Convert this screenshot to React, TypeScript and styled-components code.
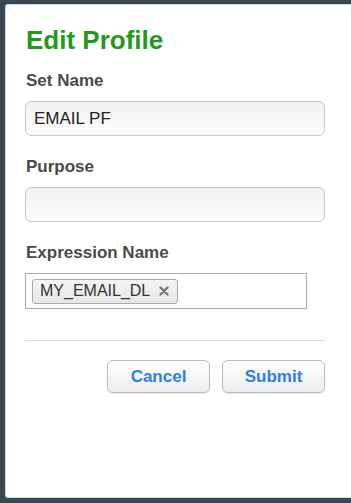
import styled, { createGlobalStyle } from "styled-components";

const GlobalStyle = createGlobalStyle`
  html, body {
    margin: 0;
    padding: 0;
    background: #3b4650;
    font-family: "Liberation Sans", Arial, sans-serif;
  }
`;

const Screen = styled.div`
  width: 351px;
  height: 503px;
  padding: 4px 0 5px 5px;
  box-sizing: border-box;
`;

const Dialog = styled.div`
  height: 100%;
  background: #fff;
  border-top: 1px solid #b6dcf5;
  border-left: 1px solid #b6dcf5;
  border-bottom: 1px solid #b6dcf5;
  border-radius: 3px 0 0 3px;
  box-sizing: border-box;
  padding: 20px 26px 0 19px;
`;

const Title = styled.h1`
  margin: 0 0 16px 1px;
  font-size: 26px;
  line-height: 30px;
  font-weight: bold;
  color: #1f9a1a;
`;

const Field = styled.div`
  display: flex;
  flex-direction: column;
  margin-bottom: 21px;
`;

const Label = styled.label`
  font-size: 17px;
  font-weight: bold;
  color: #4a4a4a;
  line-height: 20px;
  margin: 0 0 10px 1px;
`;

const TextInput = styled.input`
  height: 35px;
  box-sizing: border-box;
  width: 100%;
  border: 1px solid #c8c8c8;
  border-radius: 6px;
  background: linear-gradient(to bottom, #f1f1f1, #fcfcfc);
  padding: 0 8px;
  font-family: "Liberation Sans", Arial, sans-serif;
  font-size: 17px;
  color: #222;
  outline: none;
`;

const TagBox = styled.div`
  width: 282px;
  height: 36px;
  box-sizing: border-box;
  border: 1px solid #aaa;
  background: #fff;
  display: flex;
  align-items: center;
  padding: 0 6px;
`;

const Tag = styled.span`
  display: inline-flex;
  align-items: center;
  gap: 9px;
  height: 25px;
  box-sizing: border-box;
  padding: 0 8px 0 7px;
  border: 1px solid #aaa;
  border-radius: 3px;
  background: linear-gradient(to bottom, #f4f4f4, #e6e6e6);
  font-size: 16px;
  color: #333;
`;

const Remove = styled.svg`
  width: 10px;
  height: 10px;
`;

const Divider = styled.hr`
  border: 0;
  border-top: 1px solid #dcdcdc;
  margin: 31px 0 19px 0;
`;

const Actions = styled.div`
  display: flex;
  justify-content: flex-end;
  gap: 12px;
`;

const Button = styled.button`
  width: 103px;
  height: 33px;
  border: 1px solid #bdbdbd;
  border-radius: 6px;
  background: linear-gradient(to bottom, #ffffff, #ececec);
  box-shadow: 0 1px 1px rgba(0, 0, 0, 0.12);
  font-family: "Liberation Sans", Arial, sans-serif;
  font-size: 17px;
  font-weight: bold;
  color: #2c7fe3;
  cursor: pointer;
`;

export default function App() {
  return (
    <>
      <GlobalStyle />
      <Screen>
        <Dialog>
          <Title>Edit Profile</Title>
          <Field>
            <Label>Set Name</Label>
            <TextInput defaultValue="EMAIL PF" />
          </Field>
          <Field>
            <Label>Purpose</Label>
            <TextInput defaultValue="" />
          </Field>
          <Field>
            <Label>Expression Name</Label>
            <TagBox>
              <Tag>
                MY_EMAIL_DL
                <Remove viewBox="0 0 10 10">
                  <path d="M1.5 1.5 L8.5 8.5 M8.5 1.5 L1.5 8.5" stroke="#777" strokeWidth="2.4" strokeLinecap="round" />
                </Remove>
              </Tag>
            </TagBox>
          </Field>
          <Divider />
          <Actions>
            <Button>Cancel</Button>
            <Button>Submit</Button>
          </Actions>
        </Dialog>
      </Screen>
    </>
  );
}
